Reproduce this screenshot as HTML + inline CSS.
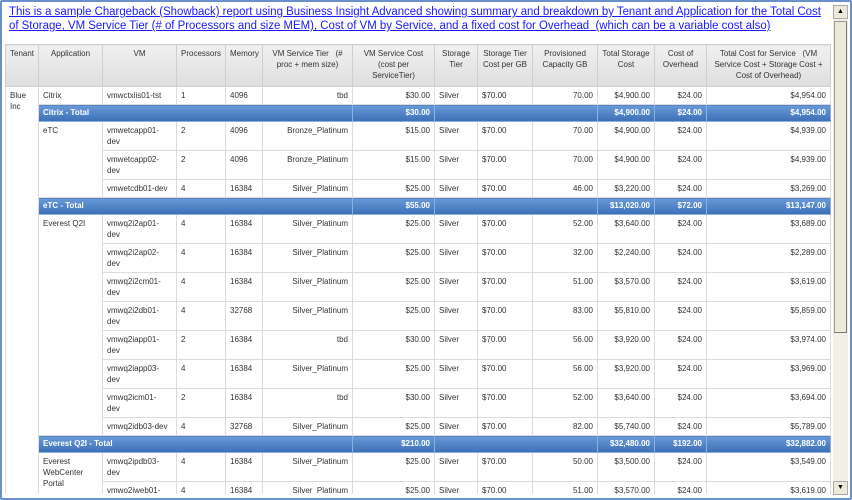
<!DOCTYPE html>
<html><head><meta charset="utf-8"><style>
*{margin:0;padding:0;box-sizing:border-box}
body{width:852px;height:500px;overflow:hidden;background:#fff;font-family:"Liberation Sans",Arial,sans-serif;position:relative}
.frame{position:absolute;left:0;top:0;width:852px;height:500px;border:2px solid #6b8fc8;border-radius:2px;pointer-events:none}
.title{position:absolute;left:9px;top:5px;font-size:11.65px;line-height:14px;color:#1a1aff;text-decoration:underline;white-space:nowrap;transform:scaleX(0.98);transform-origin:0 0}
.clip{position:absolute;left:5px;top:44px;width:826px;height:450px;overflow:hidden}
table{width:825px;border-collapse:collapse;table-layout:fixed;font-size:8px;color:#333}
td,th{border:1px solid #dcdcdc;padding:3px 4px;vertical-align:top;line-height:11px;font-weight:normal;overflow:hidden;white-space:nowrap}
th{background:linear-gradient(#f0f0f0,#dedede);color:#333;text-align:center;height:42px;border-color:#cfcfcf;white-space:normal}
.r{text-align:right}
tr.tot td{background:linear-gradient(#6a9ad8,#3b6fb6);color:#fff;font-weight:bold;height:17px;border-color:#8eb0e0;padding-top:2px;padding-bottom:2px}
tr.s td{height:17px}
tr.d td{height:29px}
td.w{white-space:normal}
.sb{position:absolute;left:833px;top:5px;width:15px;height:490px;background:#f1efe6}
.btn{position:absolute;left:0;width:15px;height:14px;background:#ece9d8;border:1px solid #aaa}
.thumb{position:absolute;left:1px;top:16px;width:13px;height:312px;background:#ece9d8;border:1px solid #999;border-right-color:#777;border-bottom-color:#777}
</style></head><body>
<div class="title">This is a sample Chargeback (Showback) report using Business Insight Advanced showing summary and breakdown by Tenant and Application for the Total Cost<br>of Storage, VM Service Tier (# of Processors and size MEM), Cost of VM by Service, and a fixed cost for Overhead&nbsp; (which can be a variable cost also)</div>
<div class="clip">
<table>
<colgroup><col style="width:33px"><col style="width:64px"><col style="width:74px"><col style="width:49px"><col style="width:37px"><col style="width:90px"><col style="width:82px"><col style="width:43px"><col style="width:55px"><col style="width:65px"><col style="width:57px"><col style="width:52px"><col style="width:124px"></colgroup>
<tr><th>Tenant</th><th>Application</th><th>VM</th><th>Processors</th><th>Memory</th><th>VM Service Tier &nbsp;&nbsp;(# proc + mem size)</th><th>VM Service Cost (cost per ServiceTier)</th><th>Storage Tier</th><th>Storage Tier Cost per GB</th><th>Provisioned Capacity GB</th><th>Total Storage Cost</th><th>Cost of Overhead</th><th>Total Cost for Service &nbsp;&nbsp;(VM Service Cost + Storage Cost + Cost of Overhead)</th></tr>
<tr class="s"><td rowspan="17" class="w">Blue Inc</td><td>Citrix</td><td>vmwctxiis01-tst</td><td>1</td><td>4096</td><td class="r">tbd</td><td class="r">$30.00</td><td>Silver</td><td>$70.00</td><td class="r">70.00</td><td class="r">$4,900.00</td><td class="r">$24.00</td><td class="r">$4,954.00</td></tr>
<tr class="tot"><td colspan="5">Citrix - Total</td><td class="r">$30.00</td><td colspan="3"></td><td class="r">$4,900.00</td><td class="r">$24.00</td><td class="r">$4,954.00</td></tr>
<tr class="d"><td rowspan="3">eTC</td><td>vmwetcapp01-<br>dev</td><td>2</td><td>4096</td><td class="r">Bronze_Platinum</td><td class="r">$15.00</td><td>Silver</td><td>$70.00</td><td class="r">70.00</td><td class="r">$4,900.00</td><td class="r">$24.00</td><td class="r">$4,939.00</td></tr>
<tr class="d"><td>vmwetcapp02-<br>dev</td><td>2</td><td>4096</td><td class="r">Bronze_Platinum</td><td class="r">$15.00</td><td>Silver</td><td>$70.00</td><td class="r">70.00</td><td class="r">$4,900.00</td><td class="r">$24.00</td><td class="r">$4,939.00</td></tr>
<tr class="s"><td>vmwetcdb01-dev</td><td>4</td><td>16384</td><td class="r">Silver_Platinum</td><td class="r">$25.00</td><td>Silver</td><td>$70.00</td><td class="r">46.00</td><td class="r">$3,220.00</td><td class="r">$24.00</td><td class="r">$3,269.00</td></tr>
<tr class="tot"><td colspan="5">eTC - Total</td><td class="r">$55.00</td><td colspan="3"></td><td class="r">$13,020.00</td><td class="r">$72.00</td><td class="r">$13,147.00</td></tr>
<tr class="d"><td rowspan="8">Everest Q2I</td><td>vmwq2i2ap01-<br>dev</td><td>4</td><td>16384</td><td class="r">Silver_Platinum</td><td class="r">$25.00</td><td>Silver</td><td>$70.00</td><td class="r">52.00</td><td class="r">$3,640.00</td><td class="r">$24.00</td><td class="r">$3,689.00</td></tr>
<tr class="d"><td>vmwq2i2ap02-<br>dev</td><td>4</td><td>16384</td><td class="r">Silver_Platinum</td><td class="r">$25.00</td><td>Silver</td><td>$70.00</td><td class="r">32.00</td><td class="r">$2,240.00</td><td class="r">$24.00</td><td class="r">$2,289.00</td></tr>
<tr class="d"><td>vmwq2i2cm01-<br>dev</td><td>4</td><td>16384</td><td class="r">Silver_Platinum</td><td class="r">$25.00</td><td>Silver</td><td>$70.00</td><td class="r">51.00</td><td class="r">$3,570.00</td><td class="r">$24.00</td><td class="r">$3,619.00</td></tr>
<tr class="d"><td>vmwq2i2db01-<br>dev</td><td>4</td><td>32768</td><td class="r">Silver_Platinum</td><td class="r">$25.00</td><td>Silver</td><td>$70.00</td><td class="r">83.00</td><td class="r">$5,810.00</td><td class="r">$24.00</td><td class="r">$5,859.00</td></tr>
<tr class="d"><td>vmwq2iapp01-<br>dev</td><td>2</td><td>16384</td><td class="r">tbd</td><td class="r">$30.00</td><td>Silver</td><td>$70.00</td><td class="r">56.00</td><td class="r">$3,920.00</td><td class="r">$24.00</td><td class="r">$3,974.00</td></tr>
<tr class="d"><td>vmwq2iapp03-<br>dev</td><td>4</td><td>16384</td><td class="r">Silver_Platinum</td><td class="r">$25.00</td><td>Silver</td><td>$70.00</td><td class="r">56.00</td><td class="r">$3,920.00</td><td class="r">$24.00</td><td class="r">$3,969.00</td></tr>
<tr class="d"><td>vmwq2icm01-<br>dev</td><td>2</td><td>16384</td><td class="r">tbd</td><td class="r">$30.00</td><td>Silver</td><td>$70.00</td><td class="r">52.00</td><td class="r">$3,640.00</td><td class="r">$24.00</td><td class="r">$3,694.00</td></tr>
<tr class="s"><td>vmwq2idb03-dev</td><td>4</td><td>32768</td><td class="r">Silver_Platinum</td><td class="r">$25.00</td><td>Silver</td><td>$70.00</td><td class="r">82.00</td><td class="r">$5,740.00</td><td class="r">$24.00</td><td class="r">$5,789.00</td></tr>
<tr class="tot"><td colspan="5">Everest Q2I - Total</td><td class="r">$210.00</td><td colspan="3"></td><td class="r">$32,480.00</td><td class="r">$192.00</td><td class="r">$32,882.00</td></tr>
<tr class="d"><td rowspan="2" class="w">Everest WebCenter Portal</td><td>vmwq2ipdb03-<br>dev</td><td>4</td><td>16384</td><td class="r">Silver_Platinum</td><td class="r">$25.00</td><td>Silver</td><td>$70.00</td><td class="r">50.00</td><td class="r">$3,500.00</td><td class="r">$24.00</td><td class="r">$3,549.00</td></tr>
<tr class="d"><td>vmwo2iweb01-<br>dev</td><td>4</td><td>16384</td><td class="r">Silver_Platinum</td><td class="r">$25.00</td><td>Silver</td><td>$70.00</td><td class="r">51.00</td><td class="r">$3,570.00</td><td class="r">$24.00</td><td class="r">$3,619.00</td></tr>
</table>
</div>
<div class="sb"><div class="btn" style="top:0;font-size:7px;text-align:center;line-height:12px">▲</div><div class="thumb"></div><div class="btn" style="bottom:0;font-size:7px;text-align:center;line-height:12px">▼</div></div>
<div class="frame"></div>
</body></html>
